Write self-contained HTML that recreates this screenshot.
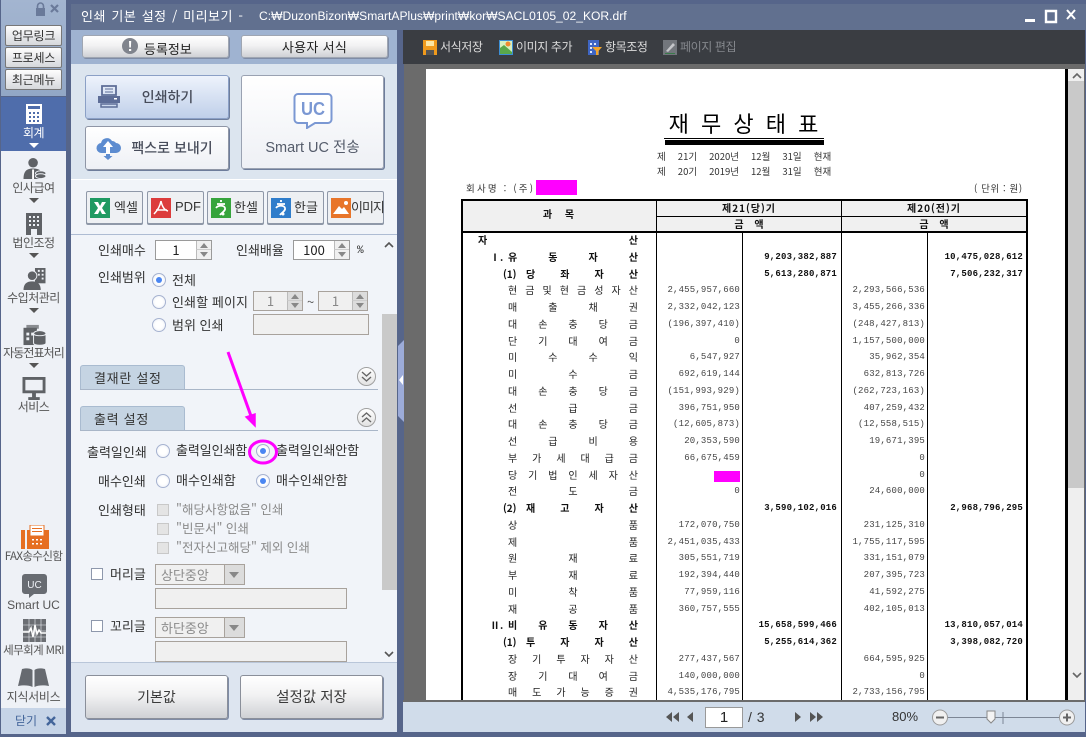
<!DOCTYPE html>
<html lang="ko"><head><meta charset="utf-8"><title>인쇄 기본 설정 / 미리보기</title>
<style>
html,body{margin:0;padding:0;width:1086px;height:737px;overflow:hidden;background:#56658a}
body{position:relative;font:13px/16px "Noto Sans CJK KR","Liberation Sans",sans-serif;color:#222}
div,span,svg,i{position:absolute;box-sizing:border-box;white-space:nowrap}
svg{display:block}
.t{color:#333}
.g{color:#8a8a8a}
.c{text-align:center}
.sb{left:1px;width:65px;text-align:center;font-size:12px;letter-spacing:-.5px;color:#555;line-height:14px}
.tri{width:0;height:0;left:29px;border:5px solid transparent;border-top:5px solid #555;border-bottom:0}
.lk{left:5px;width:57px;height:21px;border:1px solid #777;border-radius:2px;background:linear-gradient(#fdfdfd,#d6d8dc);text-align:center;font-size:12px;line-height:19px;color:#333;letter-spacing:-.2px}
.b{border:1px solid #9fa6b2;border-radius:3px;background:linear-gradient(#fff 0,#f2f2f3 45%,#cfd1d5 100%);text-align:center;color:#333;box-shadow:1px 1px 0 #7f8ca6}
.x{top:191px;width:57px;height:33px;border:1px solid #8f98a8;border-radius:2px;background:#eef0f3;box-shadow:0 1px 0 #8f98a8}
.x span{left:26px;top:7px;font-size:13px;color:#333}
.r{width:14px;height:14px;border-radius:50%;border:1px solid #a6b2d0;background:radial-gradient(#fff 40%,#e8ecf5)}
.r.on:after{content:"";position:absolute;left:3px;top:3px;width:6px;height:6px;border-radius:50%;background:#4a86f2}
.box{border:1px solid #a8a29c;background:#f0f0f0}
.sp{border:1px solid #9a9a9a;background:#fff;text-align:center;line-height:18px;color:#222}
.sp.d{background:#f0f0f0;color:#888;border-color:#a8a29c}
.up,.dn{width:15px;height:10px;right:0;background:#f0f0f0;border-left:1px solid #bbb}
.d .up,.d .dn{background:#dcdcdc}
.up{top:0}.dn{bottom:0;border-top:1px solid #ccc}
.up:after,.dn:after{content:"";position:absolute;left:3px;top:2px;border:4px solid transparent}
.up:after{border-bottom:5px solid #888;border-top:0}
.dn:after{border-top:5px solid #888;border-bottom:0}
.cb{left:157px;width:12px;height:12px;border:1px solid #c8c8c8;background:#e4e4e4}
.cb2{left:91px;width:12px;height:12px;border:1px solid #8e98ac;background:#fff}
.tab{left:80px;width:105px;height:24px;border:1px solid #a9bbd0;border-bottom:0;border-radius:3px 3px 0 0;background:#c5d4e3;padding-left:13px;line-height:23px;color:#333;letter-spacing:.7px}
.hl{left:80px;width:298px;height:1px;background:#a9b6c8}
.cir{left:357px;width:19px;height:19px;border-radius:50%;border:1px solid #a0a0a0;background:linear-gradient(#fff,#e2e2e2)}
.tb{top:39px;font-size:12px;color:#dcdcdc;letter-spacing:-.4px}
#tbl{left:461px;top:199px;width:567px;height:501px;overflow:hidden;background:#fff}
.grid{left:0;top:33px;width:567px;display:grid;grid-template-columns:196px 86px 99px 86px 100px;grid-auto-rows:16.75px;font:9px/17px "Liberation Mono",monospace;color:#444}
.grid>b,.grid>u{position:relative;display:block;font-weight:400;text-decoration:none;text-align:right;white-space:nowrap;overflow:visible}
.grid>b{padding-right:3px;letter-spacing:.02em}
.grid>u{padding-right:5px;font-weight:700;color:#111;letter-spacing:.2px}
.grid>em{position:relative;display:block;font:10px/16.75px "Noto Sans CJK KR",sans-serif;text-align:justify;text-align-last:justify;padding-right:19px;color:#222;white-space:normal}
.l0{padding-left:17px;font-weight:700!important;color:#111!important}
.l1{padding-left:47px;font-weight:700!important;color:#111!important}
.l2{padding-left:65px;font-weight:700!important;color:#111!important}
.l3{padding-left:47px}
.grid em span{top:0;font:inherit}
.vl{background:#000;width:1px}
</style></head><body>

<!-- sidebar -->
<div style="left:0;top:0;width:67px;height:737px;background:#56658a"></div>
<div style="left:1px;top:0;width:65px;height:96px;background:linear-gradient(#a3b5d0,#92a7c6)"></div>
<svg style="left:34px;top:2px" width="28" height="14" viewBox="0 0 28 14"><path d="M2 6h9v8H2z" fill="#6a7a9a"/><path d="M3.5 6V4a3 3 0 0 1 6 0v2" fill="none" stroke="#6a7a9a" stroke-width="1.6"/><path d="M17 3l7 7M24 3l-7 7" stroke="#6a7a9a" stroke-width="2.2"/></svg>
<div class="lk" style="top:25px">업무링크</div>
<div class="lk" style="top:47px">프로세스</div>
<div class="lk" style="top:69px">최근메뉴</div>
<div style="left:1px;top:97px;width:65px;height:54px;background:#4f6dab"></div>
<div style="left:1px;top:151px;width:65px;height:557px;background:#eef1f6"></div>

<svg style="left:26px;top:104px" width="16" height="20" viewBox="0 0 16 20"><path d="M0 0h16v20H0z" fill="#fff"/><path d="M2 2h12v3H2zM3 8h2v2H3zM7 8h2v2H7zM11 8h2v2h-2zM3 12h2v2H3zM7 12h2v2H7zM11 12h2v2h-2zM3 16h2v2H3zM7 16h2v2H7zM11 16h2v2h-2z" fill="#4f6dab"/></svg>
<div class="sb" style="top:126px;color:#fff">회계</div>
<div class="tri" style="top:143px;border-top-color:#fff"></div>

<svg style="left:23px;top:157px" width="24" height="23" viewBox="0 0 24 24"><circle cx="10" cy="6" r="5" fill="#5f6266"/><path d="M0 23c0-8 3-11 10-11s9 3 9 5v6z" fill="#5f6266"/><path d="M9 13h2v10H9z" fill="#fff"/><ellipse cx="18" cy="17" rx="5.5" ry="2.5" fill="#5f6266" stroke="#eef1f6"/><ellipse cx="18" cy="20" rx="5.5" ry="2.5" fill="#5f6266" stroke="#eef1f6"/></svg>
<div class="sb" style="top:181px">인사급여</div><div class="tri" style="top:198px"></div>

<svg style="left:26px;top:213px" width="16" height="22" viewBox="0 0 16 22"><path d="M0 0h16v22h-5v-6H5v6H0z" fill="#5f6266"/><path d="M3 3h2v2H3zM7 3h2v2H7zM11 3h2v2h-2zM3 7h2v2H3zM7 7h2v2H7zM11 7h2v2h-2zM3 11h2v2H3zM7 11h2v2H7zM11 11h2v2h-2z" fill="#eef1f6"/></svg>
<div class="sb" style="top:236px">법인조정</div><div class="tri" style="top:253px"></div>

<svg style="left:23px;top:268px" width="23" height="22" viewBox="0 0 23 23"><path d="M12 0h11v16H12z" fill="#5f6266"/><path d="M15 2h2v2h-2zM19 2h2v2h-2zM15 6h2v2h-2zM19 6h2v2h-2zM19 10h2v2h-2z" fill="#eef1f6"/><circle cx="9" cy="8" r="5" fill="#5f6266" stroke="#eef1f6"/><path d="M0 23c0-6 3-9 9-9s9 3 9 9z" fill="#5f6266"/></svg>
<div class="sb" style="top:291px">수입처관리</div><div class="tri" style="top:308px"></div>

<svg style="left:23px;top:323px" width="24" height="23" viewBox="0 0 24 24"><path d="M3 2h13v4H3z" fill="#8a8d91"/><path d="M0 5h14v18H0z" fill="#5f6266"/><path d="M3 10h3v3H3zM3 15h3v3H3zM8 10h3v3H8z" fill="#eef1f6"/><ellipse cx="17" cy="11" rx="6.5" ry="3" fill="#5f6266" stroke="#eef1f6"/><path d="M10.500 11v10c0 3 13 3 13 0V11c0 3-13 3-13 0z" fill="#5f6266" stroke="#eef1f6"/></svg>
<div class="sb" style="top:346px;letter-spacing:-.9px">자동전표처리</div><div class="tri" style="top:363px"></div>

<svg style="left:22px;top:377px" width="24" height="23" viewBox="0 0 24 24"><path d="M0 0h24v17H0zM10 17h4v4h4v3H6v-3h4z" fill="#5f6266"/><path d="M3 3h18v11H3z" fill="#eef1f6"/></svg>
<div class="sb" style="top:400px">서비스</div>

<svg style="left:21px;top:525px" width="28" height="24" viewBox="0 0 28 24"><path d="M0 5h4v19H0z" fill="#e66f22"/><path d="M6 5h22v19H6z" fill="#e66f22"/><path d="M9 0h14v11H9z" fill="#fff" stroke="#e66f22"/><path d="M11 3h10v1H11zM11 6h10v1H11z" fill="#e66f22"/><path d="M11 14h2v1.500h-2zM15 14h2v1.500h-2zM19 14h2v1.500h-2zM11 18h2v1.500h-2zM15 18h2v1.500h-2zM19 18h2v1.500h-2z" fill="#fff"/></svg>
<div class="sb" style="top:549px;font-size:11.500px;letter-spacing:-.6px">FAX송수신함</div>

<svg style="left:22px;top:574px" width="25" height="24" viewBox="0 0 25 24"><path d="M3 0h19a3 3 0 0 1 3 3v14a3 3 0 0 1-3 3H12l-5 4v-4H3a3 3 0 0 1-3-3V3a3 3 0 0 1 3-3z" fill="#686c72"/><text x="12.500" y="14" text-anchor="middle" font-family="Liberation Sans" font-size="10" fill="#eef1f6">UC</text></svg>
<div class="sb" style="top:598px;font:12px/14px 'Liberation Sans',sans-serif;letter-spacing:0">Smart UC</div>

<svg style="left:23px;top:619px" width="23" height="23" viewBox="0 0 23 23"><path d="M0 0h23v23H0z" fill="#6b6e73"/><path d="M6 0v23M12 0v23M18 0v23M0 6h23M0 12h23M0 18h23" stroke="#eef1f6" stroke-width=".6"/><path d="M0 13h6l2-4 2 9 2-12 2 9 2-4 2 3h5" fill="none" stroke="#fff" stroke-width="1.500"/></svg>
<div class="sb" style="top:643px;font-size:11.500px;letter-spacing:-.6px">세무회계 MRI</div>

<svg style="left:18px;top:668px" width="31" height="19" viewBox="0 0 31 19"><path d="M4 1c4-1 8-1 10.500 1v17C11 17 5 17 0 18zM27 1c-4-1-8-1-10.500 1v17c3.500-2 9.500-2 14.500-1z" fill="#666a70"/></svg>
<div class="sb" style="top:690px;letter-spacing:-.3px">지식서비스</div>

<div style="left:1px;top:708px;width:65px;height:26px;background:#c6d4e7"></div>
<div style="left:15px;top:713px;font-size:12px;color:#43659a">닫기</div>
<svg style="left:46px;top:716px" width="10" height="10" viewBox="0 0 10 10"><path d="M1 1l8 8M9 1L1 9" stroke="#43659a" stroke-width="2.400"/></svg>

<!-- title bar -->
<div style="left:71px;top:4px;width:1015px;height:26px;background:#61708f"></div>
<div style="left:81px;top:8px;color:#fff;font-size:13px;letter-spacing:.5px;word-spacing:1.300px">인쇄 기본 설정 / 미리보기 -</div>
<div style="left:259px;top:8px;color:#fff;font:12.100px/16px 'Liberation Sans','Noto Sans CJK KR',sans-serif">C:₩DuzonBizon₩SmartAPlus₩print₩kor₩SACL0105_02_KOR.drf</div>
<svg style="left:1025px;top:9px" width="52" height="16" viewBox="0 0 52 16"><path d="M0 10h10v3H0z" fill="#fff"/><path d="M21 2h10v11H21z" fill="none" stroke="#fff" stroke-width="2.400"/><path d="M42 1l8 9M50 1l-8 9" stroke="#fff" stroke-width="2"/></svg>

<!-- left dialog panel -->
<div style="left:71px;top:30px;width:326px;height:34px;background:#9fb3d1"></div>
<div style="left:71px;top:64px;width:326px;height:115px;background:#dce5ef"></div>
<div style="left:71px;top:179px;width:326px;height:1px;background:#fff"></div>
<div style="left:71px;top:180px;width:326px;height:54px;background:#f1f4f9"></div>
<div style="left:71px;top:234px;width:326px;height:1px;background:#aebcd3"></div>
<div style="left:71px;top:235px;width:326px;height:427px;background:#f1f4f9"></div>

<div class="b" style="left:82px;top:35px;width:147px;height:23px;line-height:21px"><span style="left:61px;top:2px;color:#222">등록정보</span></div>
<svg style="left:122px;top:38px" width="16" height="16" viewBox="0 0 16 16"><circle cx="8" cy="8" r="8" fill="#80848d"/><path d="M7 3h2.200l-.3 6.500H7.300zM7 11h2.200v2H7z" fill="#fff"/></svg>
<div class="b" style="left:241px;top:35px;width:147px;height:23px;line-height:21px;letter-spacing:.3px;color:#222">사용자 서식</div>

<div style="left:85px;top:75px;width:144px;height:44px;border:1px solid #8ba0c6;border-radius:3px;background:linear-gradient(#eef3fc,#bfcfe9);box-shadow:1px 1px 0 #6e7d9b;text-align:center;line-height:42px;font-size:14px;font-weight:500;color:#474c5a;padding-left:21px">인쇄하기</div>
<svg style="left:97px;top:85px" width="24" height="23" viewBox="0 0 24 23"><path d="M5 1h14v9H5z" fill="none" stroke="#5d6d97" stroke-width="1.800"/><path d="M8 4h8M8 7h8" stroke="#5d6d97"/><path d="M1 11h22v7H1z" fill="#5d6d97"/><path d="M4 19h16v3H4z" fill="none" stroke="#5d6d97" stroke-width="1.500"/><path d="M17 13h3v1.500h-3z" fill="#fff"/></svg>
<div style="left:85px;top:126px;width:144px;height:44px;border:1px solid #8f96a6;border-radius:3px;background:linear-gradient(#fff,#eef0f5);box-shadow:1px 1px 0 #6e7d9b;text-align:center;line-height:42px;font-size:14px;font-weight:500;color:#474c5a;padding-left:30px">팩스로 보내기</div>
<svg style="left:96px;top:136px" width="25" height="24" viewBox="0 0 25 24"><path d="M6 17a5 5 0 0 1-1-10 6 6 0 0 1 11-2 5 5 0 0 1 4 2 5 5 0 0 1 0 10z" fill="#5d8cd0"/><path d="M12 5l-5 6h3v7h4v-7h3z" fill="#fff"/><path d="M10 18h4v2h2.500L12 24l-4.500-4H10z" fill="#5d8cd0"/></svg>
<div style="left:241px;top:75px;width:143px;height:94px;border:1px solid #9aa2b2;border-radius:3px;background:linear-gradient(#fff,#eef0f5);box-shadow:1px 1px 0 #6e7d9b"></div>
<svg style="left:293px;top:93px" width="40" height="36" viewBox="0 0 40 36"><path d="M5 1h30a3.500 3.500 0 0 1 3.500 3.500v22a3.500 3.500 0 0 1-3.500 3.500H22l-8 5v-5H5a3.500 3.500 0 0 1-3.500-3.500v-22A3.500 3.500 0 0 1 5 1z" fill="#fff" stroke="#7b98d3" stroke-width="2"/><text x="20" y="22" text-anchor="middle" font-family="Liberation Sans" font-weight="700" font-size="18" textLength="24" lengthAdjust="spacingAndGlyphs" fill="#7b98d3">UC</text></svg>
<div style="left:241px;top:138px;width:143px;text-align:center;font:14.500px/20px 'Liberation Sans','Noto Sans CJK KR',sans-serif;color:#555c6b">Smart UC 전송</div>

<div class="x" style="left:86px"><svg style="left:3px;top:6px" width="20" height="20" viewBox="0 0 20 20"><path d="M0 0h20v20H0z" fill="#1f9a62"/><path d="M4 4h4l2 4 2-4h4l-4 6 4 6h-4l-2-4-2 4H4l4-6z" fill="#fff"/></svg><span style="left:27px">엑셀</span></div>
<div class="x" style="left:147px"><svg style="left:3px;top:6px" width="20" height="20" viewBox="0 0 20 20"><path d="M0 0h20v20H0z" fill="#dc3c3c"/><path d="M10 3c-1 5-3 9-7 13M10 3c1 5 3 9 7 10M5 12h11" fill="none" stroke="#fff" stroke-width="1.500"/></svg><span style="left:27px;font-family:'Liberation Sans';font-size:13px">PDF</span></div>
<div class="x" style="left:207px"><svg style="left:3px;top:6px" width="20" height="20" viewBox="0 0 20 20"><path d="M0 0h20v20H0z" fill="#36a43c"/><path d="M10 2v2M6 6h8M5 10c2-3 8-3 9 0s-4 5-5 7" fill="none" stroke="#fff" stroke-width="1.800"/><circle cx="12" cy="16" r="1.500" fill="#fff"/></svg><span>한셀</span></div>
<div class="x" style="left:267px"><svg style="left:3px;top:6px" width="20" height="20" viewBox="0 0 20 20"><path d="M0 0h20v20H0z" fill="#2f7dcb"/><path d="M10 2v2M6 6h8M5 10c2-3 8-3 9 0s-4 5-5 7" fill="none" stroke="#fff" stroke-width="1.800"/><circle cx="12" cy="16" r="1.500" fill="#fff"/></svg><span>한글</span></div>
<div class="x" style="left:327px"><svg style="left:3px;top:6px" width="20" height="20" viewBox="0 0 20 20"><path d="M0 0h20v20H0z" fill="#e8752a"/><circle cx="15" cy="5" r="2" fill="#fff"/><path d="M2 16l6-8 3 3 2-2 5 7z" fill="#fff"/></svg><span style="left:23px;letter-spacing:-1px">이미지</span></div>

<div class="t" style="left:98px;top:242px">인쇄매수</div>
<div class="sp" style="left:155px;top:240px;width:57px;height:20px;padding-right:15px">1<i class="up"></i><i class="dn"></i></div>
<div class="t" style="left:236px;top:242px">인쇄배율</div>
<div class="sp" style="left:293px;top:240px;width:57px;height:20px;padding-right:15px">100<i class="up"></i><i class="dn"></i></div>
<div class="t" style="left:357px;top:243px;font:11px/16px 'Liberation Mono',monospace">%</div>
<div class="t" style="left:98px;top:269px">인쇄범위</div>
<div class="r on" style="left:152px;top:273px"></div><div class="t" style="left:172px;top:272px">전체</div>
<div class="r" style="left:152px;top:295px"></div><div class="t" style="left:172px;top:294px;letter-spacing:.1px">인쇄할 페이지</div>
<div class="sp d" style="left:253px;top:291px;width:50px;height:20px;padding-right:15px">1<i class="up"></i><i class="dn"></i></div>
<div class="g" style="left:307px;top:294px;color:#555">~</div>
<div class="sp d" style="left:318px;top:291px;width:50px;height:20px;padding-right:15px">1<i class="up"></i><i class="dn"></i></div>
<div class="r" style="left:152px;top:318px"></div><div class="t" style="left:172px;top:317px">범위 인쇄</div>
<div class="box" style="left:253px;top:314px;width:116px;height:21px"></div>

<div class="tab" style="top:365px">결재란 설정</div><div class="hl" style="top:389px"></div>
<div class="cir" style="top:367px"><svg style="left:3px;top:3px" width="11" height="11" viewBox="0 0 11 11"><path d="M1 1l4.500 4 4.500-4M1 6l4.500 4 4.500-4" fill="none" stroke="#666" stroke-width="1.400"/></svg></div>
<div class="tab" style="top:406px">출력 설정</div><div class="hl" style="top:430px"></div>
<div class="cir" style="top:408px"><svg style="left:3px;top:3px" width="11" height="11" viewBox="0 0 11 11"><path d="M1 5l4.500-4 4.500 4M1 10l4.500-4 4.500 4" fill="none" stroke="#666" stroke-width="1.400"/></svg></div>

<div class="t" style="left:87px;top:444px">출력일인쇄</div>
<div class="r" style="left:156px;top:444px"></div><div class="t" style="left:176px;top:442px;letter-spacing:-.1px">출력일인쇄함</div>
<div class="r on" style="left:256px;top:444px"></div><div class="t" style="left:276px;top:442px;letter-spacing:-.1px">출력일인쇄안함</div>
<div class="t" style="left:98px;top:473px">매수인쇄</div>
<div class="r" style="left:156px;top:474px"></div><div class="t" style="left:176px;top:472px">매수인쇄함</div>
<div class="r on" style="left:256px;top:474px"></div><div class="t" style="left:276px;top:472px">매수인쇄안함</div>
<div class="t" style="left:98px;top:502px">인쇄형태</div>
<div class="cb" style="top:504px"></div><div class="g" style="left:176px;top:501px;font-size:12.500px">"해당사항없음" 인쇄</div>
<div class="cb" style="top:523px"></div><div class="g" style="left:176px;top:520px;font-size:12.500px">"빈문서" 인쇄</div>
<div class="cb" style="top:542px"></div><div class="g" style="left:176px;top:539px;font-size:12.500px">"전자신고해당" 제외 인쇄</div>

<div class="cb2" style="top:568px"></div><div class="t" style="left:110px;top:566px">머리글</div>
<div class="box" style="left:155px;top:564px;width:90px;height:21px;line-height:20px;padding-left:5px;color:#8a8a8a">상단중앙<i style="right:0;top:0;width:20px;height:19px;background:#dcdcdc;border-left:1px solid #a8a29c"></i><i style="right:5px;top:7px;border:5px solid transparent;border-top:6px solid #888;border-bottom:0"></i></div>
<div class="box" style="left:155px;top:588px;width:192px;height:21px"></div>
<div class="cb2" style="top:620px"></div><div class="t" style="left:110px;top:618px">꼬리글</div>
<div class="box" style="left:155px;top:617px;width:90px;height:21px;line-height:20px;padding-left:5px;color:#8a8a8a">하단중앙<i style="right:0;top:0;width:20px;height:19px;background:#dcdcdc;border-left:1px solid #a8a29c"></i><i style="right:5px;top:7px;border:5px solid transparent;border-top:6px solid #888;border-bottom:0"></i></div>
<div class="box" style="left:155px;top:641px;width:192px;height:21px"></div>

<!-- left scrollbar -->
<div style="left:382px;top:235px;width:15px;height:427px;background:#f1f4f9"></div>
<div style="left:382px;top:314px;width:15px;height:276px;background:#c9c9c9"></div>
<svg style="left:384px;top:241px" width="10" height="7" viewBox="0 0 10 7"><path d="M1 6l4-4 4 4" fill="none" stroke="#555" stroke-width="1.600"/></svg>
<svg style="left:384px;top:651px" width="10" height="7" viewBox="0 0 10 7"><path d="M1 1l4 4 4-4" fill="none" stroke="#555" stroke-width="1.600"/></svg>

<!-- bottom buttons -->
<div style="left:71px;top:662px;width:326px;height:70px;background:#dde5f0;border-top:1px solid #b9c6d9"></div>
<div class="b" style="left:85px;top:675px;width:143px;height:44px;line-height:42px;font-size:14px;border-color:#8a8f9a;color:#3a3a3a">기본값</div>
<div class="b" style="left:240px;top:675px;width:143px;height:44px;line-height:42px;font-size:14.500px;border-color:#8a8f9a;color:#3a3a3a">설정값 저장</div>

<!-- divider -->
<svg style="left:398px;top:338px" width="6" height="86" viewBox="0 0 6 86"><path d="M0 8L6 2v82l-6-6z" fill="#9cabd8"/><path d="M5 37l-4 5 4 5z" fill="#fff"/></svg>

<!-- right side -->
<div style="left:403px;top:30px;width:682px;height:34px;background:#3a3d42"></div>
<div style="left:404px;top:64px;width:681px;height:637px;background:#6b6b6b"></div>
<svg style="left:423px;top:40px" width="14" height="15" viewBox="0 0 14 15"><path d="M0 0h14v15H0z" fill="#f09a1c"/><path d="M3 1h8v5H3z" fill="#fbe6a4"/><path d="M3 10h8v5H3z" fill="#555"/></svg>
<div class="tb" style="left:440px">서식저장</div>
<svg style="left:499px;top:40px" width="14" height="15" viewBox="0 0 14 15"><path d="M0 0h14v15H0z" fill="#3c8fd6"/><path d="M1 1h12v13H1z" fill="#d8f0c0"/><path d="M1 8l4-3 8 7v2H1z" fill="#5aa84a"/><circle cx="9" cy="4" r="2.500" fill="#f08a30"/></svg>
<div class="tb" style="left:516px">이미지 추가</div>
<svg style="left:588px;top:40px" width="14" height="15" viewBox="0 0 14 15"><path d="M0 0h11v15H0z" fill="#3f66c4"/><path d="M2 3h2v2H2zM6 3h2v2H6zM2 7h2v2H2zM2 11h2v2H2z" fill="#dfe8fb"/><path d="M4 7h10L10.500 11v4H8v-4z" fill="#f2a52a"/></svg>
<div class="tb" style="left:605px">항목조정</div>
<svg style="left:663px;top:40px" width="14" height="15" viewBox="0 0 14 15"><path d="M0 0h14v15H0z" fill="#72767c"/><path d="M3 11L10 3l2 2-7 7z" fill="#c4c6ca"/><path d="M2 13h10v1H2z" fill="#3a7a4a"/></svg>
<div class="tb" style="left:680px;color:#85888d">페이지 편집</div>

<!-- paper -->
<div style="left:426px;top:69px;width:639px;height:632px;background:#fff"></div>
<div style="left:1065px;top:69px;width:3px;height:632px;background:#000"></div>
<div style="left:1068px;top:69px;width:16px;height:632px;background:#efefef"></div>
<div style="left:1068px;top:81px;width:16px;height:407px;background:#c9c9c9"></div>
<svg style="left:1072px;top:72px" width="10" height="7" viewBox="0 0 10 7"><path d="M1 6l4-4 4 4" fill="none" stroke="#666" stroke-width="1.600"/></svg>
<svg style="left:1072px;top:672px" width="10" height="7" viewBox="0 0 10 7"><path d="M1 1l4 4 4-4" fill="none" stroke="#666" stroke-width="1.600"/></svg>

<div style="left:664px;top:108px;width:160px;text-align:center;font-size:22px;line-height:30px;color:#000;letter-spacing:1px;word-spacing:4px">재 무 상 태 표</div>
<div style="left:664px;top:138px;width:160px;height:1px;background:#000"></div>
<div style="left:665px;top:140px;width:159px;height:5px;background:#000"></div>
<div style="left:657px;top:149px;font-size:9.500px;line-height:14px;color:#333;word-spacing:9.400px">제 21기 2020년 12월 31일 현재</div>
<div style="left:657px;top:164px;font-size:9.500px;line-height:14px;color:#333;word-spacing:9.400px">제 20기 2019년 12월 31일 현재</div>
<div style="left:466px;top:181px;font-size:9.500px;line-height:14px;color:#333;letter-spacing:2.200px">회사명 : (주)</div>
<div style="left:536px;top:180px;width:41px;height:15px;background:#f0f"></div>
<div style="left:974px;top:181px;font-size:9.500px;line-height:14px;color:#333;letter-spacing:.6px">( 단위 : 원)</div>

<div id="tbl">
<div style="left:0;top:2px;width:567px;height:30px;background:#f0f0f0"></div>
<div style="left:0;top:0;width:566px;height:2px;background:#000"></div>
<div style="left:196px;top:17px;width:371px;height:1px;background:#000"></div>
<div style="left:0;top:32px;width:566px;height:2px;background:#000"></div>
<div style="left:0;top:0;width:2px;height:501px;background:#000"></div>
<div style="left:565px;top:0;width:2px;height:501px;background:#000"></div>
<div class="vl" style="left:195px;top:0;height:501px"></div>
<div class="vl" style="left:380px;top:0;height:501px"></div>
<div class="vl" style="left:281px;top:33px;height:468px"></div>
<div class="vl" style="left:466px;top:33px;height:468px"></div>
<div style="left:0;top:7px;width:195px;text-align:center;font-size:10px;font-weight:700;word-spacing:10px;color:#111">과 목</div>
<div style="left:196px;top:1px;width:184px;text-align:center;font-size:10px;font-weight:700;letter-spacing:1px;color:#111">제21(당)기</div>
<div style="left:196px;top:17px;width:184px;text-align:center;font-size:10px;font-weight:700;word-spacing:8px;color:#111">금 액</div>
<div style="left:381px;top:1px;width:184px;text-align:center;font-size:10px;font-weight:700;letter-spacing:1px;color:#111">제20(전)기</div>
<div style="left:381px;top:17px;width:184px;text-align:center;font-size:10px;font-weight:700;word-spacing:8px;color:#111">금 액</div>
<div class="grid">
<em class="l0">자 산</em><b></b><u></u><b></b><u></u>
<em class="l1"><span style="left:29px">Ⅰ.</span>유 동 자 산</em><b></b><u>9,203,382,887</u><b></b><u>10,475,028,612</u>
<em class="l2"><span style="left:42px">(1)</span>당 좌 자 산</em><b></b><u>5,613,280,871</u><b></b><u>7,506,232,317</u>
<em class="l3">현 금 및 현 금 성 자 산</em><b>2,455,957,660</b><u></u><b>2,293,566,536</b><u></u>
<em class="l3">매 출 채 권</em><b>2,332,042,123</b><u></u><b>3,455,266,336</b><u></u>
<em class="l3">대 손 충 당 금</em><b>(196,397,410)</b><u></u><b>(248,427,813)</b><u></u>
<em class="l3">단 기 대 여 금</em><b>0</b><u></u><b>1,157,500,000</b><u></u>
<em class="l3">미 수 수 익</em><b>6,547,927</b><u></u><b>35,962,354</b><u></u>
<em class="l3">미 수 금</em><b>692,619,144</b><u></u><b>632,813,726</b><u></u>
<em class="l3">대 손 충 당 금</em><b>(151,993,929)</b><u></u><b>(262,723,163)</b><u></u>
<em class="l3">선 급 금</em><b>396,751,950</b><u></u><b>407,259,432</b><u></u>
<em class="l3">대 손 충 당 금</em><b>(12,605,873)</b><u></u><b>(12,558,515)</b><u></u>
<em class="l3">선 급 비 용</em><b>20,353,590</b><u></u><b>19,671,395</b><u></u>
<em class="l3">부 가 세 대 급 금</em><b>66,675,459</b><u></u><b>0</b><u></u>
<em class="l3">당 기 법 인 세 자 산</em><b><i style="left:57px;top:4px;width:26px;height:11px;background:#f0f"></i></b><u></u><b>0</b><u></u>
<em class="l3">전 도 금</em><b>0</b><u></u><b>24,600,000</b><u></u>
<em class="l2"><span style="left:42px">(2)</span>재 고 자 산</em><b></b><u>3,590,102,016</u><b></b><u>2,968,796,295</u>
<em class="l3">상 품</em><b>172,070,750</b><u></u><b>231,125,310</b><u></u>
<em class="l3">제 품</em><b>2,451,035,433</b><u></u><b>1,755,117,595</b><u></u>
<em class="l3">원 재 료</em><b>305,551,719</b><u></u><b>331,151,079</b><u></u>
<em class="l3">부 재 료</em><b>192,394,440</b><u></u><b>207,395,723</b><u></u>
<em class="l3">미 착 품</em><b>77,959,116</b><u></u><b>41,592,275</b><u></u>
<em class="l3">재 공 품</em><b>360,757,555</b><u></u><b>402,105,013</b><u></u>
<em class="l1"><span style="left:29px">Ⅱ.</span>비 유 동 자 산</em><b></b><u>15,658,599,466</u><b></b><u>13,810,057,014</u>
<em class="l2"><span style="left:42px">(1)</span>투 자 자 산</em><b></b><u>5,255,614,362</u><b></b><u>3,398,082,720</u>
<em class="l3">장 기 투 자 자 산</em><b>277,437,567</b><u></u><b>664,595,925</b><u></u>
<em class="l3">장 기 대 여 금</em><b>140,000,000</b><u></u><b>0</b><u></u>
<em class="l3">매 도 가 능 증 권</em><b>4,535,176,795</b><u></u><b>2,733,156,795</b><u></u>
</div>
</div>

<!-- nav bar -->
<div style="left:403px;top:700px;width:682px;height:2px;background:#6b6b6b"></div>
<div style="left:403px;top:702px;width:682px;height:30px;background:#d0dcea"></div>
<svg style="left:665px;top:710px" width="30" height="14" viewBox="0 0 30 14"><path d="M1 7l6-5v10zM8 7l6-5v10zM22 7l6-5v10z" fill="#555"/></svg>
<div style="left:705px;top:707px;width:38px;height:21px;border:1px solid #999;background:#fff;text-align:center;font:15px/19px 'Liberation Sans',sans-serif;color:#222">1</div>
<div style="left:748px;top:709px;font:14px/16px 'Liberation Sans',sans-serif;color:#333;word-spacing:1px">/ 3</div>
<svg style="left:794px;top:710px" width="30" height="14" viewBox="0 0 30 14"><path d="M1 2l6 5-6 5zM16 2l6 5-6 5zM23 2l6 5-6 5z" fill="#555"/></svg>
<div style="left:892px;top:709px;font:13px/16px 'Liberation Sans',sans-serif;color:#333">80%</div>
<svg style="left:931px;top:706px" width="146" height="24" viewBox="0 0 146 24"><path d="M17 11.500h112" stroke="#7d8695"/><path d="M72 6v12" stroke="#7d8695"/><circle cx="9" cy="11.500" r="7.500" fill="#f0f0f0" stroke="#9a9a9a"/><path d="M5 11.500h8" stroke="#666" stroke-width="2"/><circle cx="136" cy="11.500" r="7.500" fill="#f0f0f0" stroke="#9a9a9a"/><path d="M132 11.500h8M136 7.500v8" stroke="#666" stroke-width="2"/><path d="M56 5h8v8l-4 4-4-4z" fill="#f4f4f4" stroke="#888"/></svg>

<!-- magenta annotation -->
<svg style="left:0;top:0" width="1086" height="737" viewBox="0 0 1086 737"><path d="M228 352L251 416" stroke="#f0f" stroke-width="3" fill="none"/><path d="M246 417L255 414L255 426z" fill="#f0f" stroke="#f0f" stroke-width="1.500"/><ellipse cx="263" cy="452" rx="13.500" ry="11" fill="none" stroke="#f0f" stroke-width="3"/></svg>
</body></html>
